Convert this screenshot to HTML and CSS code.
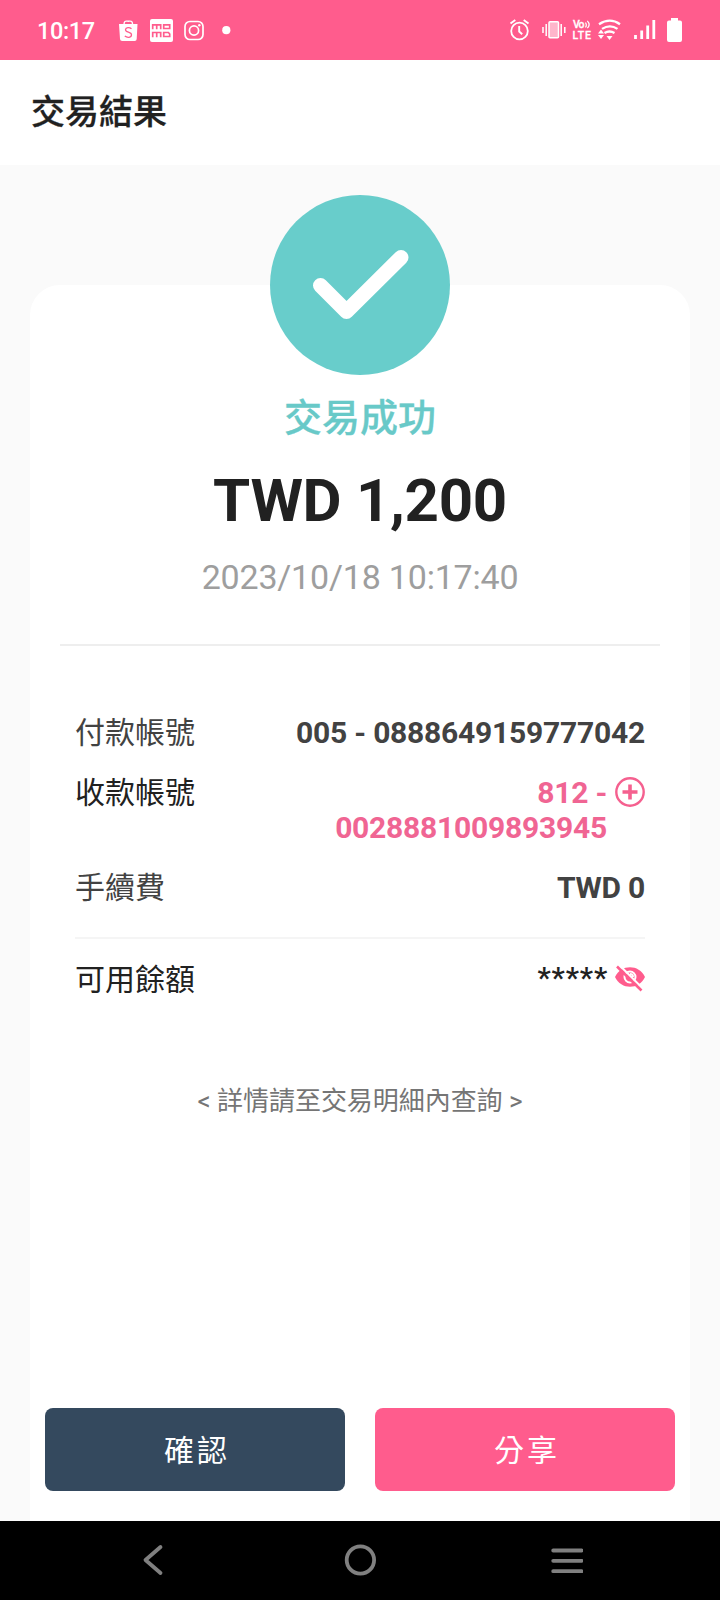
FILE: index.html
```html
<!DOCTYPE html>
<html lang="zh-Hant">
<head>
    <meta charset="UTF-8">
    <meta name="viewport" content="width=device-width, initial-scale=1.0">
    <title>交易結果</title>
    <link rel="stylesheet" href="styles.css">
</head>
<body>
    <div class="status-bar">
        <span class="time">10:17</span>
        <svg class="status-left" width="116" height="26" viewBox="118 17 116 26">
            <!-- shop -->
            <path d="M119 24h18.500l-.8 15q-.1 2-2 2h-12.500q-2 0-2.200-2z" fill="#fff"/>
            <path d="M124 25c0-5 2-3.800 4.300-3.800s4.300-1 4.300 3.800" fill="none" stroke="#fff" stroke-width="1.400"/>
            <path d="M131.500 28.800c-1.800-1.500-5.800-1.700-6 .8-.2 3.200 6 2 6 5.200 0 3-4.300 3.200-6.700 1.300" fill="none" stroke="#ff5c8d" stroke-width="1.300"/>
            <!-- momo -->
            <rect x="150" y="19" width="23" height="23" rx="2" fill="#fff"/>
            <path d="M152.700 29.200v-4.400h8v4.400M156.700 25v4.200M163.700 24.800h6v3.700h-6zM152.700 37.200v-4.700h8v4.700M156.700 32.500v4.700M163.700 32.500h4.700l1.300 1.500v2.500h-6z" fill="none" stroke="#ff5c8d" stroke-width="1.700"/>
            <!-- camera -->
            <g fill="none" stroke="#fff" stroke-width="1.700">
                <rect x="185" y="21.500" width="18" height="18" rx="5"/>
                <circle cx="194" cy="30.500" r="4.600"/>
            </g>
            <circle cx="199.300" cy="25.200" r="1.200" fill="#fff"/>
            <circle cx="226.300" cy="30.200" r="4.100" fill="#fff"/>
        </svg>
        <svg class="status-right" width="176" height="28" viewBox="508 16 176 28" fill="none" stroke="#fff">
            <!-- alarm -->
            <circle cx="519.500" cy="31" r="8.300" stroke-width="1.800"/>
            <path d="M519.200 26v5.500l3 2.800M510.500 23.500l4.800-3.500M528.500 23.500l-4.800-3.500" stroke-width="1.900"/>
            <!-- vibrate -->
            <rect x="549" y="21.700" width="9.500" height="16" rx="1" fill="#ffb5cb" stroke-width="1.500"/>
            <path d="M546.200 24v12M561.200 24v12M543 27v6M564.800 27v6" stroke-width="1.500"/>
            <!-- volte -->
            <g class="volte">
                <text x="573" y="28" textLength="11.500">Vo</text>
                <text x="572.500" y="38.700" textLength="18.500">LTE</text>
            </g>
            <path d="M585.500 22.500q1.700 2.500 0 5M587.300 20.800q3.600 3.700 0 7.400" stroke-width="1.200"/>
            <!-- wifi -->
            <path d="M599 24.200q11-7 21 0M602 28.900q8-5.200 15.500 0M604.500 33q5-3 10 0" stroke-width="2.300"/>
            <path d="M598 33.500l3-4 3 4zM598 35l3 4 3-4zM606.500 36l3 4 3-4z" fill="#fff" stroke="none"/>
            <!-- signal -->
            <path d="M635.500 35v4M641.700 30.500v8.500M647.700 25.500v13.500M653.800 20v19" stroke-width="2.800"/>
            <!-- battery -->
            <path d="M671 18h7v2.500h2q2 0 2 2v17.500q0 2-2 2h-11q-2 0-2-2v-17.500q0-2 2-2h2z" fill="#fff" stroke="none"/>
        </svg>
    </div>

    <header class="header">
        <h1>交易結果</h1>
    </header>

    <main class="content">
        <section class="card">
            <svg class="success-icon" width="180" height="180" viewBox="0 0 180 180">
                <circle cx="90" cy="90" r="90" fill="#68cdcb"/>
                <path d="M50.500 90.500l26 26 54.500-54" fill="none" stroke="#fff" stroke-width="15" stroke-linecap="round" stroke-linejoin="round"/>
            </svg>
            <p class="result">交易成功</p>
            <p class="amount">TWD 1,200</p>
            <p class="date">2023/10/18 10:17:40</p>

            <div class="details">
                <div class="row">
                    <span class="label">付款帳號</span>
                    <span class="value">005 - 0888649159777042</span>
                </div>
                <div class="row payee">
                    <span class="label">收款帳號</span>
                    <span class="value">812 -<br>0028881009893945</span>
                    <svg class="icon" width="30" height="30" viewBox="0 0 30 30" fill="none" stroke="#f5608f">
                        <circle cx="15" cy="15" r="13.700" stroke-width="2.400"/>
                        <path d="M15 7.500v15M7.500 15h15" stroke-width="3.600"/>
                    </svg>
                </div>
                <div class="row fee">
                    <span class="label">手續費</span>
                    <span class="value">TWD 0</span>
                </div>
                <div class="row balance">
                    <span class="label">可用餘額</span>
                    <span class="value">*****</span>
                    <svg class="icon" width="30" height="30" viewBox="0 0 30 30" fill="none">
                        <path d="M0 15C6 2 24 2 30 15C24 28 6 28 0 15z" fill="#ff5c8d"/>
                        <circle cx="15" cy="15" r="5.500" stroke="#fff" stroke-width="2"/>
                        <path d="M15 12a3 3 0 0 1 3 3" stroke="#fff" stroke-width="2"/>
                        <path d="M3.700 2.500l24.500 24.500" stroke="#fff" stroke-width="2.200"/>
                        <path d="M2 4.500l24.500 24" stroke="#ff5c8d" stroke-width="2.600"/>
                    </svg>
                </div>
            </div>

            <p class="hint">&lt; 詳情請至交易明細內查詢 &gt;</p>

            <div class="buttons">
                <button class="btn btn-confirm">確認</button>
                <button class="btn btn-share">分享</button>
            </div>
        </section>
    </main>

    <nav class="nav-bar">
        <svg width="32" height="32" viewBox="0 0 32 32"><path d="M23.500 3L8.500 16 23.500 29"/></svg>
        <svg width="32" height="32" viewBox="0 0 32 32"><circle cx="16.400" cy="16" r="13.700"/></svg>
        <svg width="32" height="32" viewBox="0 0 32 32"><path d="M2.200 6.500h28.500M2.200 16.800h28.500M2.200 27.200h28.500"/></svg>
    </nav>
</body>
</html>
```
FILE: styles.css
```css
* { box-sizing: border-box; }
body {
    display: flex;
    flex-direction: column;
    height: 1600px;
    margin: 0;
    background: #fafafa;
    color: #212121;
    font-family: Roboto, "Noto Sans CJK TC", sans-serif;
}
h1, p { margin: 0; }

/* status bar */
.status-bar {
    display: flex;
    align-items: center;
    height: 60px;
    padding: 0 36px 0 37px;
    background: #ff5c8d;
    color: #fff;
}
.time {
    width: 81px;
    padding-top: 1px;
    font-size: 23.5px;
    font-weight: 500;
    letter-spacing: -0.4px;
    line-height: 60px;
}
.status-right { margin-left: auto; }
.volte text {
    fill: #fff;
    stroke: #fff;
    stroke-width: 0.3px;
    font-size: 10.5px;
    font-weight: 500;
}

.header {
    height: 105px;
    padding-left: 31px;
    background: #fff;
}
.header h1 {
    font-size: 34px;
    font-weight: 500;
    line-height: 105px;
    -webkit-text-stroke: 0.3px;
}

/* card */
.content { flex: 1; padding: 120px 30px 0; }
.card {
    display: flex;
    flex-direction: column;
    align-items: center;
    height: 100%;
    padding: 0 15px 30px;
    background: #fff;
    border-radius: 30px 30px 0 0;
}
.success-icon { flex: none; margin-top: -90px; }
.result {
    margin-top: 18px;
    color: #68c9c8;
    font-size: 38px;
    font-weight: 500;
    line-height: 50px;
    -webkit-text-stroke: 0.3px;
}
.amount {
    margin-top: 21px;
    font-size: 60px;
    font-weight: 700;
    letter-spacing: -0.3px;
    line-height: 74px;
}
.date {
    margin-top: 17px;
    color: #9e9e9e;
    font-size: 34px;
    letter-spacing: -0.2px;
    line-height: 44px;
}

/* details */
.details {
    width: 600px;
    margin-top: 45px;
    padding: 69px 15px 0;
    border-top: 2px solid #eee;
}
.row {
    display: flex;
    justify-content: space-between;
    font-size: 30px;
    line-height: 35px;
    margin-bottom: 25px;
}
.value {
    margin-left: auto;
    font-weight: 700;
    letter-spacing: -0.22px;
    text-align: right;
}
.row:not(.payee):not(.balance) { color: #424242; }
.payee .value { color: #f06593; }
.icon { flex: none; margin-left: 8px; }
.payee .icon { margin-top: 2px; }
.fee { margin-bottom: 0; padding-bottom: 32px; border-bottom: 2px solid #f5f5f5; }
.balance { margin: 23px 0 0; }
.balance .value {
    font-weight: 500;
    letter-spacing: 0.8px;
    line-height: 31px;
}
.balance .icon { margin-left: 7px; }

.hint {
    margin-top: 86px;
    color: #757575;
    font-size: 26px;
    letter-spacing: -0.05px;
    line-height: 36px;
}

.buttons { display: flex; gap: 30px; width: 100%; margin-top: auto; }
.btn {
    flex: 1;
    height: 83px;
    padding: 0 0 4px 4px;
    border: none;
    border-radius: 8px;
    color: #fff;
    font-family: inherit;
    font-size: 30px;
    letter-spacing: 3px;
}
.btn-confirm { background: #34495e; }
.btn-share { background: #ff5c8d; }

/* navigation bar */
.nav-bar {
    display: flex;
    align-items: center;
    justify-content: space-between;
    height: 79px;
    padding: 0 137px 1px;
    background: #000;
}
.nav-bar svg {
    fill: none;
    stroke: #808080;
    stroke-width: 3.800;
    stroke-linecap: round;
    stroke-linejoin: round;
}
```
